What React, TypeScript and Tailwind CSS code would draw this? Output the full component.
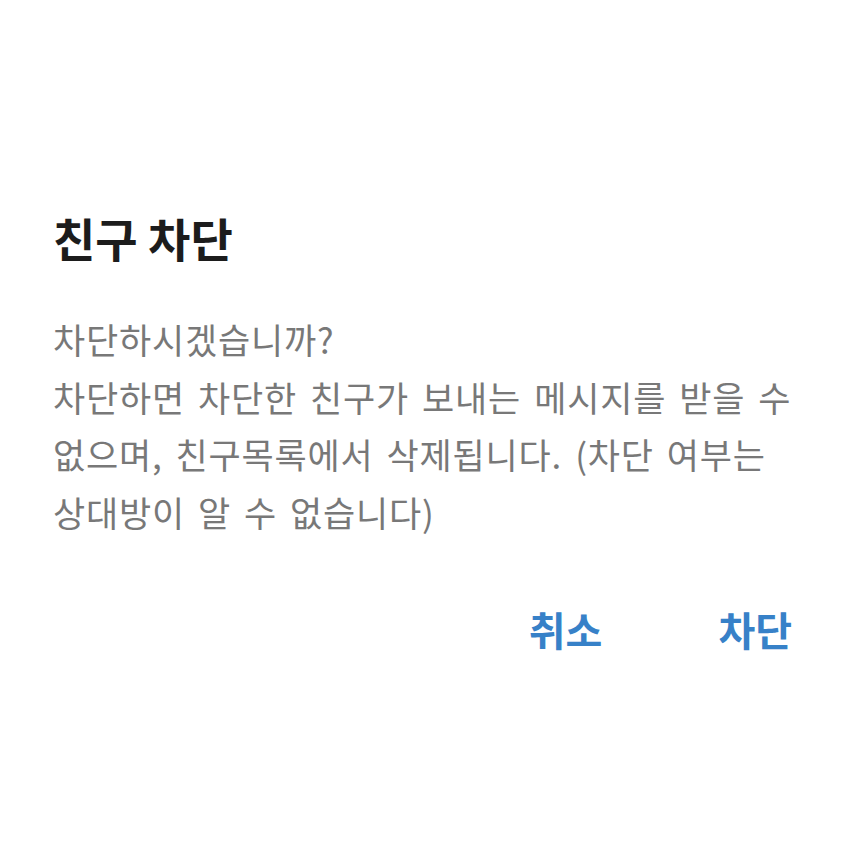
export default function App() {
  return (
    <div
      className="w-[852px] h-[852px] bg-white flex flex-col"
      style={{ fontFamily: '"Noto Sans CJK KR", "Noto Sans", sans-serif' }}
    >
      <div className="pl-[53px] pr-[60px] pt-[204px]">
        <h1 className="text-[46px] leading-[66px] font-bold text-[#1c1c1c]">친구 차단</h1>
        <p className="mt-[40px] text-[35px] leading-[57.5px] tracking-[0.8px] [word-spacing:4.4px] text-[#787878]">
          차단하시겠습니까?
          <br />
          차단하면 차단한 친구가 보내는 메시지를 받을 수
          <br />
          없으며, 친구목록에서 삭제됩니다. (차단 여부는
          <br />
          상대방이 알 수 없습니다)
        </p>
        <div className="mt-[59px] flex justify-end gap-[116px]">
          <button className="text-[40px] font-bold text-[#3781c8] leading-[60px]">취소</button>
          <button className="text-[40px] font-bold text-[#3781c8] leading-[60px]">차단</button>
        </div>
      </div>
    </div>
  );
}
